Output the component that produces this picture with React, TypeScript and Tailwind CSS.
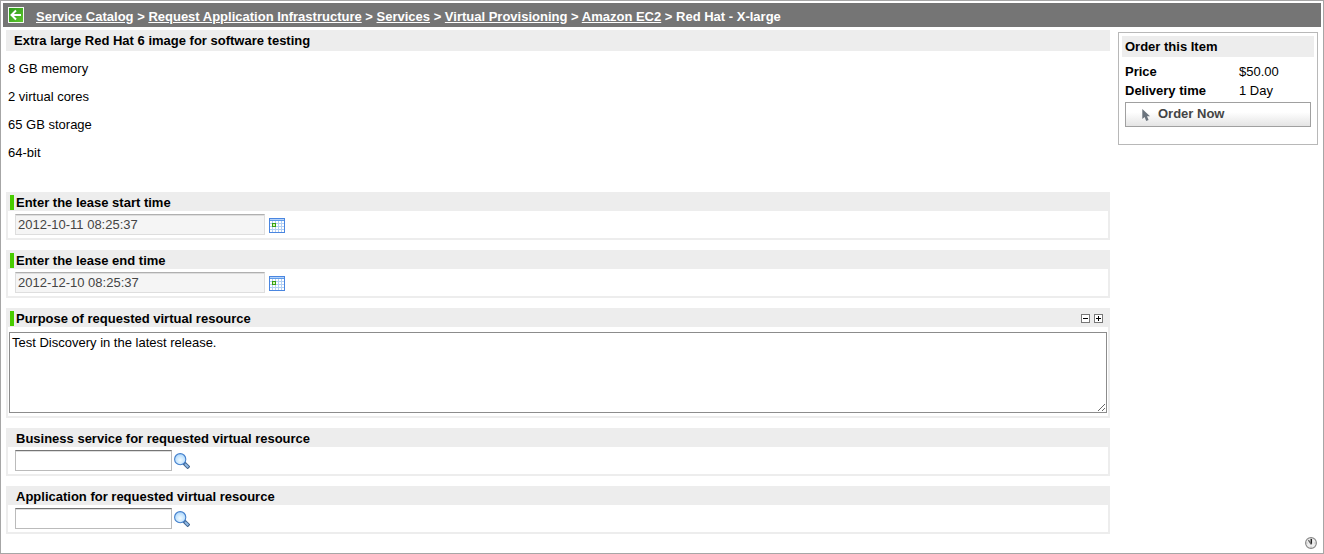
import React, { useState } from "react";

const crumbs = [
  "Service Catalog",
  "Request Application Infrastructure",
  "Services",
  "Virtual Provisioning",
  "Amazon EC2",
];

const specs = ["8 GB memory", "2 virtual cores", "65 GB storage", "64-bit"];

function BackIcon() {
  return (
    <svg width="16" height="16" viewBox="0 0 16 16" aria-hidden="true">
      <defs>
        <linearGradient id="back-fill" x1="0" y1="0" x2="1" y2="1">
          <stop offset="0" stopColor="#2f9a1c" />
          <stop offset="1" stopColor="#5cc52c" />
        </linearGradient>
      </defs>
      <rect width="16" height="16" fill="#f4faf2" />
      <rect x="1" y="1" width="14" height="14" fill="url(#back-fill)" />
      <path d="M13 8H4M8 3.5L3.5 8L8 12.5" fill="none" stroke="#fff" strokeWidth="2" />
    </svg>
  );
}

function CalendarIcon() {
  return (
    <svg width="16" height="15" viewBox="0 0 16 15" shapeRendering="crispEdges" aria-hidden="true">
      <rect width="16" height="15" fill="#4a86e0" />
      <rect x="1" y="1" width="14" height="1" fill="#b5d3fa" />
      <rect x="1" y="2" width="14" height="1" fill="#5f9be8" />
      <rect x="1" y="3" width="14" height="11" fill="#fff" />
      <path d="M3.5 3v11M6.500 3v11M9.500 3v11M12.500 3v11M1 5.500h14M1 8.500h14M1 11.500h14" stroke="#b3d0f4" />
      <rect x="3" y="5" width="4" height="4" fill="#37a012" />
      <rect x="4" y="6" width="2" height="2" fill="#d5f5b5" />
    </svg>
  );
}

function MagnifierIcon() {
  return (
    <svg width="16" height="16" viewBox="0 0 16 16" aria-hidden="true">
      <defs>
        <radialGradient id="lens" cx="0.5" cy="0.6" r="0.65">
          <stop offset="0" stopColor="#f2fbff" />
          <stop offset="1" stopColor="#a4d3fc" />
        </radialGradient>
      </defs>
      <path d="M9.800 9.800L15 15" stroke="#3f628c" strokeWidth="3.800" />
      <path d="M11 11L14.300 14.300" stroke="#8fb9e6" strokeWidth="2" />
      <circle cx="6.200" cy="6.200" r="5.600" fill="url(#lens)" stroke="#4580cc" strokeWidth="1.100" />
    </svg>
  );
}

function PointerIcon() {
  return (
    <svg width="8" height="12" viewBox="0 0 8 12" aria-hidden="true">
      <path d="M0.300 0V10L2.600 8L4.200 12L6.600 11L5 7.300H8Z" fill="#6b747d" />
    </svg>
  );
}

function SizeIcon({ plus = false }: { plus?: boolean }) {
  return (
    <svg width="9" height="9" viewBox="0 0 9 9" shapeRendering="crispEdges" aria-hidden="true">
      <rect x="0.5" y="0.5" width="8" height="8" fill="#fff" stroke="#777" />
      <path d={plus ? "M2 4.500h5M4.500 2v5" : "M2 4.500h5"} stroke="#000" />
    </svg>
  );
}

function ClockIcon() {
  return (
    <svg width="12" height="12" viewBox="0 0 12 12" aria-hidden="true">
      <circle cx="6" cy="6" r="5.400" fill="#eee" stroke="#858585" strokeWidth="1.100" />
      <path d="M6 1.500v1M6 9.500v1M1.500 6h1M9.500 6h1" stroke="#999" strokeWidth="0.800" />
      <path d="M6.300 2V7.300" stroke="#222" strokeWidth="1.500" />
      <path d="M3.400 3.200L6.200 7" stroke="#666" strokeWidth="1.400" />
    </svg>
  );
}

type FieldProps = {
  id: string;
  label: string;
  required?: boolean;
  actions?: React.ReactNode;
  children: React.ReactNode;
};

function Field({ id, label, required, actions, children }: FieldProps) {
  return (
    <div className="border-2 border-t-0 border-[#ededed]">
      <div className="flex h-[19px] items-center bg-[#ededed] pl-0.5 pr-[5px]">
        <span className={required ? "mt-0.5 h-[15px] w-1 bg-[#48cc00]" : "w-1"} />
        <label htmlFor={id} className="mt-0.5 pl-0.5 font-bold">
          {label}
        </label>
        {actions}
      </div>
      {children}
    </div>
  );
}

function DateField({ id, label, value }: { id: string; label: string; value: string }) {
  return (
    <Field id={id} label={label} required>
      <div className="flex items-center gap-1 pt-[3px] pb-[3px] pl-[7px]">
        <input
          id={id}
          readOnly
          defaultValue={value}
          className="h-[21px] w-[250px] border border-[#dedede] border-t-[#b0b0b0] bg-[#f5f5f5] px-0.5 text-[#444] shadow-[inset_0_1px_0_#dedede] outline-none"
        />
        <button type="button" aria-label={"Choose date: " + label} className="mt-0.5">
          <CalendarIcon />
        </button>
      </div>
    </Field>
  );
}

function LookupField({ id, label }: { id: string; label: string }) {
  return (
    <Field id={id} label={label}>
      <div className="flex items-center gap-0.5 pt-[3px] pb-[3px] pl-[7px]">
        <input
          id={id}
          className="h-[21px] w-[157px] border border-[#bbb] border-t-[#757575] bg-white px-0.5 shadow-[inset_0_1px_0_#dedede] outline-none"
        />
        <button type="button" aria-label={"Look up: " + label}>
          <MagnifierIcon />
        </button>
      </div>
    </Field>
  );
}

export default function App() {
  const [height, setHeight] = useState(81);

  return (
    <div className="flex min-h-screen flex-col border border-[#a6a6a6] bg-white p-0.5 font-['Liberation_Sans',Arial,sans-serif] text-[13px] leading-[15px] text-black [&_svg]:block">
      <header className="flex min-h-6 items-center gap-3 bg-[#757575] px-[5px] text-white">
        <button type="button" aria-label="Back">
          <BackIcon />
        </button>
        <nav aria-label="Breadcrumb" className="pt-0.5 font-bold">
          {crumbs.map((crumb) => (
            <React.Fragment key={crumb}>
              <a href="#" className="underline">
                {crumb}
              </a>
              {" > "}
            </React.Fragment>
          ))}
          Red Hat - X-large
        </nav>
      </header>

      <div className="flex flex-1 items-start gap-2 px-[3px] pt-[3px]">
        <main className="min-w-0 flex-1">
          <h1 className="bg-[#ededed] py-[3px] pl-2 font-bold">Extra large Red Hat 6 image for software testing</h1>
          <div className="flex flex-col gap-[13px] pt-2.5 pl-0.5">
            {specs.map((spec) => (
              <p key={spec}>{spec}</p>
            ))}
          </div>
          <form className="mt-8 flex flex-col gap-2.5" onSubmit={(e) => e.preventDefault()}>
            <DateField id="lease-start" label="Enter the lease start time" value="2012-10-11 08:25:37" />
            <DateField id="lease-end" label="Enter the lease end time" value="2012-12-10 08:25:37" />
            <Field
              id="purpose"
              label="Purpose of requested virtual resource"
              required
              actions={
                <span className="ml-auto flex gap-1 pt-0.5">
                  <button type="button" aria-label="Shrink text box" onClick={() => setHeight(Math.max(41, height - 40))}>
                    <SizeIcon />
                  </button>
                  <button type="button" aria-label="Enlarge text box" onClick={() => setHeight(height + 40)}>
                    <SizeIcon plus />
                  </button>
                </span>
              }
            >
              <div className="px-px pt-[5px] pb-[3px]">
                <textarea
                  id="purpose"
                  defaultValue="Test Discovery in the latest release."
                  style={{ height }}
                  className="block w-full resize border border-[#8c8c8c] px-0.5 py-0.5 outline-none"
                />
              </div>
            </Field>
            <LookupField id="business-service" label="Business service for requested virtual resource" />
            <LookupField id="application" label="Application for requested virtual resource" />
          </form>
        </main>

        <aside className="mt-0.5 w-[200px] shrink-0 border border-[#b8b8b8] p-[3px] pb-[17px]">
          <h2 className="bg-[#ededed] py-[3px] pl-[3px] font-bold">Order this Item</h2>
          <table className="mt-[5px] ml-[3px]">
            <tbody>
              <tr className="h-[19px]">
                <th scope="row" className="w-[114px] text-left font-bold">Price</th>
                <td>$50.00</td>
              </tr>
              <tr className="h-[19px]">
                <th scope="row" className="text-left font-bold">Delivery time</th>
                <td>1 Day</td>
              </tr>
            </tbody>
          </table>
          <div className="px-[3px] pt-0.5">
            <button
              type="button"
              className="flex h-[25px] w-full items-center gap-2 border border-[#a0a0a0] bg-linear-to-b from-white from-40% to-[#e4e4e4] pb-0.5 pl-4 font-bold text-[#444]"
            >
              <span className="pt-0.5">
                <PointerIcon />
              </span>
              Order Now
            </button>
          </div>
        </aside>
      </div>

      <footer className="flex justify-end pt-0.5 pr-1 pb-0.5">
        <button type="button" aria-label="Response time">
          <ClockIcon />
        </button>
      </footer>
    </div>
  );
}
